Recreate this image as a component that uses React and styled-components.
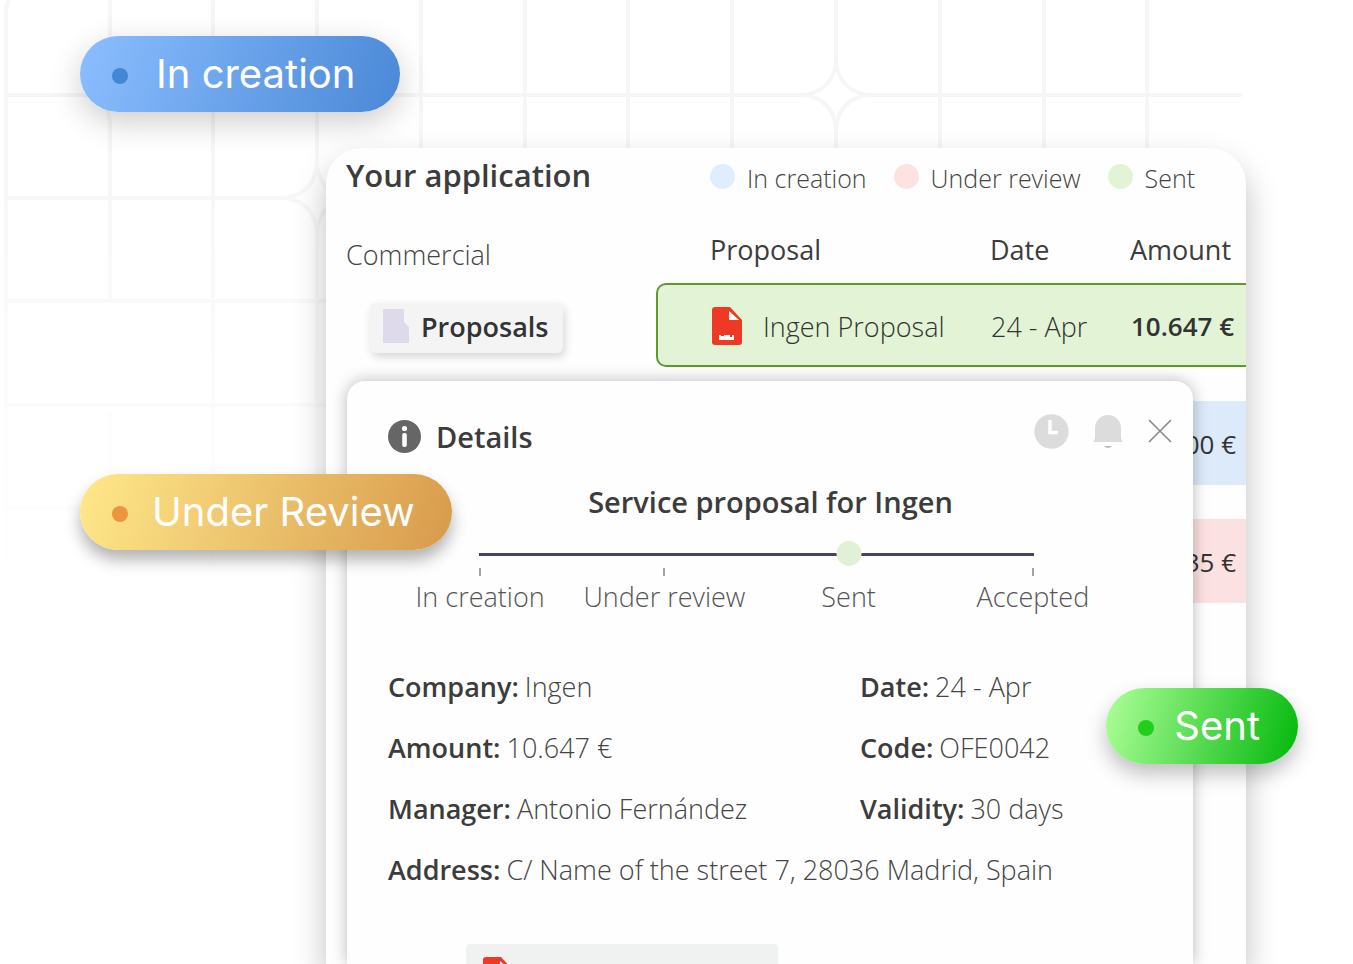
import styled, { createGlobalStyle } from "styled-components";

const GlobalStyle = createGlobalStyle`
	* {
		box-sizing: border-box;
	}
	body {
		margin: 0;
		background-color: white;
		font-family: "Open Sans", sans-serif;
		color: #3c3c3c;
	}
`;

const StyledScene = styled.main`
	position: relative;
	display: flex;
	height: 100vh;
	padding: 148px 107px 0 326px;
	overflow: hidden;
`;

const StyledGrid = styled.svg`
	position: absolute;
	top: 0;
	left: 0;
	z-index: -1;
`;

const StyledBadge = styled.div`
	position: absolute;
	z-index: 2;
	top: ${(props) => props.$top};
	left: ${(props) => props.$left};
	right: ${(props) => props.$right};
	display: flex;
	align-items: center;
	gap: ${(props) => props.$gap};
	height: 76px;
	padding: 0 ${(props) => props.$end} 0 32px;
	border-radius: 38px;
	background-image: linear-gradient(
		${(props) => props.$angle},
		${(props) => props.$from},
		${(props) => props.$to}
	);
	box-shadow: ${(props) => props.$shadow};
	color: white;
	font-family: Inter, sans-serif;
	font-size: 40px;
	font-weight: 400;
	line-height: 76px;
	white-space: nowrap;
	&::before {
		content: "";
		width: 16px;
		height: 16px;
		margin-top: 4px;
		border-radius: 50%;
		background-color: ${(props) => props.$dot};
	}
`;

const StyledCard = styled.section`
	position: relative;
	flex: 1;
	display: flex;
	border-radius: 36px 36px 0 0;
	background-color: #fefefe;
	box-shadow: 0 16px 32px rgba(0, 0, 0, 0.25);
`;

const StyledSidebar = styled.div`
	width: 330px;
	padding: 8px 20px;
`;

const StyledHeading = styled.h1`
	margin: 0;
	font-size: 31px;
	font-weight: 600;
	line-height: 38px;
`;

const StyledGroup = styled.p`
	margin: 41px 0 28px;
	color: #444;
	font-size: 27px;
	font-weight: 300;
	line-height: 40px;
`;

const StyledNavButton = styled.button`
	display: flex;
	align-items: center;
	gap: 12px;
	height: 50px;
	margin-left: 24px;
	padding: 0 14px 4px 12px;
	border: none;
	border-radius: 6px;
	background-color: #f4f4f5;
	box-shadow: 2px 4px 8px rgba(60, 60, 80, 0.2);
	color: #333;
	font-family: inherit;
	font-size: 27px;
	font-weight: 600;
`;

const StyledContent = styled.div`
	flex: 1;
	min-width: 0;
	padding-top: 12px;
`;

const StyledLegend = styled.ul`
	display: flex;
	gap: 27px;
	margin: 0;
	padding: 0 0 0 54px;
	list-style: none;
	color: #444;
	font-size: 25px;
	font-weight: 300;
	line-height: 36px;
	white-space: nowrap;
`;

const StyledLegendItem = styled.li`
	display: flex;
	gap: 12px;
	&::before {
		content: "";
		width: 25px;
		height: 25px;
		margin-top: 4px;
		border-radius: 50%;
		background-color: ${(props) => props.$color};
	}
`;

const StyledTable = styled.table`
	display: block;
	margin-top: 32px;
	font-size: 27px;
	white-space: nowrap;
	& tbody {
		display: flex;
		flex-direction: column;
		gap: 34px;
		margin-top: 11px;
	}
	& th,
	& td {
		padding: 0;
		text-align: left;
	}
`;

const StyledHeadRow = styled.tr`
	display: grid;
	grid-template-columns: 280px 140px 1fr;
	padding-left: 52px;
	line-height: 40px;
	& th {
		font-weight: 500;
	}
`;

const StyledRow = styled.tr`
	display: grid;
	grid-template-columns: 280px 140px 1fr;
	align-items: center;
	height: 84px;
	padding: 2px 0 0 53px;
	border: 2px solid ${(props) => props.$border || props.$color};
	border-width: 2px 0 2px 2px;
	border-radius: 10px 0 0 10px;
	background-color: ${(props) => props.$color};
	color: #333;
	font-weight: 300;
	& td:first-child {
		display: flex;
		align-items: center;
		gap: 20px;
	}
	& td:last-child {
		padding-right: ${(props) => (props.$border ? "0" : "10px")};
		text-align: ${(props) => (props.$border ? "left" : "right")};
		font-size: 26px;
		font-weight: ${(props) => (props.$border ? "600" : "400")};
	}
`;

const StyledDialog = styled.section`
	position: absolute;
	top: 233px;
	bottom: 0;
	left: 21px;
	right: 53px;
	overflow: hidden;
	padding: 29px 20px 0 41px;
	border-radius: 18px 18px 0 0;
	background-color: #fefefe;
	box-shadow: 0 0 16px rgba(0, 0, 0, 0.28);
`;

const StyledDialogHeader = styled.header`
	display: flex;
	justify-content: space-between;
	height: 52px;
`;

const StyledDialogName = styled.h2`
	display: flex;
	align-items: center;
	gap: 15px;
	margin: 0;
	font-size: 29px;
	font-weight: 600;
`;

const StyledActions = styled.div`
	display: flex;
	align-items: center;
	gap: 22px;
	height: 42px;
	& button {
		display: flex;
		padding: 0;
		border: none;
		background: none;
	}
`;

const StyledTitle = styled.h3`
	margin: 20px 20px 31px 0;
	font-size: 29px;
	font-weight: 600;
	line-height: 40px;
	text-align: center;
`;

const StyledProgress = styled.div`
	margin-right: 48px;
`;

const StyledTrack = styled.div`
	height: 3px;
	margin: 0 calc(12.5% - 1px);
	background-color: #494063;
`;

const StyledSteps = styled.ol`
	display: grid;
	grid-template-columns: repeat(4, 1fr);
	margin: 0;
	padding: 0;
	list-style: none;
`;

const StyledStep = styled.li`
	position: relative;
	padding-top: 21px;
	color: #555;
	font-size: 27px;
	font-weight: 300;
	line-height: 40px;
	text-align: center;
	white-space: nowrap;
	&::before {
		content: "";
		position: absolute;
		top: ${(props) => (props.$current ? "-15px" : "12px")};
		left: 50%;
		width: ${(props) => (props.$current ? "25px" : "2px")};
		height: ${(props) => (props.$current ? "25px" : "8px")};
		border-radius: ${(props) => (props.$current ? "50%" : "0")};
		background-color: ${(props) => (props.$current ? "#e0f1d5" : "#a3a3a0")};
		transform: translateX(-50%);
	}
`;

const StyledFields = styled.dl`
	display: grid;
	grid-template-columns: 472px 1fr;
	row-gap: 21px;
	margin: 50px 0 54px;
	font-size: 27px;
	line-height: 40px;
	white-space: nowrap;
`;

const StyledField = styled.div`
	display: flex;
	gap: 6px;
	grid-column: ${(props) => (props.$wide ? "1 / -1" : "auto")};
	& dt {
		font-weight: 600;
	}
	& dd {
		margin: 0;
		color: #444;
		font-weight: 300;
	}
`;

const StyledAttachment = styled.div`
	width: 312px;
	height: 80px;
	margin-left: 78px;
	padding: 12px 16px;
	border-radius: 4px;
	background-color: #f0f1f1;
`;

const statuses = [
	{ name: "In creation", color: "#e0edfd" },
	{ name: "Under review", color: "#fde2e1" },
	{ name: "Sent", color: "#e2f4d5" },
];

const steps = ["In creation", "Under review", "Sent", "Accepted"];

const fields = [
	{ label: "Company:", value: "Ingen" },
	{ label: "Date:", value: "24 - Apr" },
	{ label: "Amount:", value: "10.647 €" },
	{ label: "Code:", value: "OFE0042" },
	{ label: "Manager:", value: "Antonio Fernández" },
	{ label: "Validity:", value: "30 days" },
	{
		label: "Address:",
		value: "C/ Name of the street 7, 28036 Madrid, Spain",
		wide: true,
	},
];

const PdfIcon = () => (
	<svg width="32" height="40" viewBox="0 0 32 40" aria-hidden="true">
		<path
			d="M4 1h15l12 13v22a3 3 0 0 1-3 3H4a3 3 0 0 1-3-3V4a3 3 0 0 1 3-3z"
			fill="#ee3a24"
		/>
		<path d="M18 5v9h10z" fill="white" />
		<path d="M8 29h15v5H8z" fill="white" />
		<path d="M10 29v1h3v-1zM17 31h2v-2h2v2h-2z" fill="#ee3a24" />
	</svg>
);

const BackgroundGrid = () => (
	<StyledGrid width="1353" height="620" aria-hidden="true">
		<defs>
			<linearGradient id="fade" x1="0" y1="0" x2="0" y2="1">
				<stop offset="0" stopColor="white" />
				<stop offset="0.2" stopColor="white" />
				<stop offset="0.95" stopColor="black" />
			</linearGradient>
			<mask id="fadeMask">
				<rect width="1353" height="620" fill="url(#fade)" />
			</mask>
		</defs>
		<g stroke="#f6f6f8" strokeWidth="4" fill="none" mask="url(#fadeMask)">
			<path d="M12 -4Q6 2 6 12V620M110 0V88M110 125V301M110 412V620M213 0V620M317 0V166M317 230V620" />
			<path d="M421 0V160M525 0V160M628 0V160M732 0V160M940 0V160M1044 0V160M1147 0V160M836 0V63M836 127V160" />
			<path d="M6 95H804M868 95H1242M6 198H285M6 301H330M6 405H330M6 508H330" />
			<path d="M80 95Q110 95 110 125" />
			<path d="M804 95Q832 91 836 63Q840 91 868 95Q840 99 836 127Q832 99 804 95z" />
			<path d="M285 198Q313 194 317 166Q321 194 349 198Q321 202 317 230Q313 202 285 198z" />
		</g>
	</StyledGrid>
);

export default function App() {
	return (
		<>
			<GlobalStyle />
			<StyledScene>
				<BackgroundGrid />

				<StyledCard>
					<StyledSidebar>
						<StyledHeading>Your application</StyledHeading>
						<StyledGroup>Commercial</StyledGroup>
						<StyledNavButton type="button">
							<svg width="27" height="34" viewBox="0 0 27 34" aria-hidden="true">
								<path d="M1 0h21v13l5 5v16H1z" fill="#dedaec" />
							</svg>
							Proposals
						</StyledNavButton>
					</StyledSidebar>

					<StyledContent>
						<StyledLegend>
							{statuses.map((status) => (
								<StyledLegendItem key={status.name} $color={status.color}>
									{status.name}
								</StyledLegendItem>
							))}
						</StyledLegend>
						<StyledTable>
							<thead>
								<StyledHeadRow>
									<th>Proposal</th>
									<th>Date</th>
									<th>Amount</th>
								</StyledHeadRow>
							</thead>
							<tbody>
								<StyledRow $color="#e2f4d5" $border="#5c9a2c">
									<td>
										<PdfIcon />
										Ingen Proposal
									</td>
									<td>24 - Apr</td>
									<td>10.647 €</td>
								</StyledRow>
								<StyledRow $color="#ddeafa">
									<td></td>
									<td></td>
									<td>00 €</td>
								</StyledRow>
								<StyledRow $color="#fbe1e1">
									<td></td>
									<td></td>
									<td>35 €</td>
								</StyledRow>
							</tbody>
						</StyledTable>
					</StyledContent>

					<StyledDialog>
						<StyledDialogHeader>
							<StyledDialogName>
								<svg width="33" height="33" viewBox="0 0 33 33" aria-hidden="true">
									<circle cx="16.5" cy="16.5" r="16.5" fill="#666" />
									<circle cx="16.5" cy="8.5" r="2.6" fill="white" />
									<rect x="14.2" y="13" width="4.6" height="14" rx="2" fill="white" />
								</svg>
								Details
							</StyledDialogName>
							<StyledActions>
								<button type="button" aria-label="History">
									<svg width="35" height="35" viewBox="0 0 35 35">
										<circle cx="17.5" cy="17.5" r="17.2" fill="#dcdcdc" />
										<path d="M16 6v12.500h8" fill="none" stroke="white" strokeWidth="3.500" />
									</svg>
								</button>
								<button type="button" aria-label="Notifications">
									<svg width="34" height="35" viewBox="0 0 34 35">
										<path
											d="M4 14a13 13 0 0 1 26 0v9q0 3 2 5H2q2-2 2-5z"
											fill="#dcdcdc"
										/>
										<path d="M13 32h8q-4 4-8 0z" fill="#bbb" />
									</svg>
								</button>
								<button type="button" aria-label="Close">
									<svg width="26" height="26" viewBox="0 0 26 26">
										<path d="M2 2l22 22M24 2L2 24" stroke="#888" strokeWidth="1.600" />
									</svg>
								</button>
							</StyledActions>
						</StyledDialogHeader>

						<StyledTitle>Service proposal for Ingen</StyledTitle>

						<StyledProgress>
							<StyledTrack />
							<StyledSteps>
								{steps.map((step) => (
									<StyledStep key={step} $current={step === "Sent"}>
										{step}
									</StyledStep>
								))}
							</StyledSteps>
						</StyledProgress>

						<StyledFields>
							{fields.map((field) => (
								<StyledField key={field.label} $wide={field.wide}>
									<dt>{field.label}</dt>
									<dd>{field.value}</dd>
								</StyledField>
							))}
						</StyledFields>

						<StyledAttachment>
							<PdfIcon />
						</StyledAttachment>
					</StyledDialog>
				</StyledCard>

				<StyledBadge
					$top="36px"
					$left="80px"
					$gap="28px"
					$end="45px"
					$angle="110deg"
					$from="#8bbeff"
					$to="#4a88d6"
					$dot="#4388d4"
					$shadow="0 10px 32px rgba(0, 0, 0, 0.2)"
				>
					In creation
				</StyledBadge>
				<StyledBadge
					$top="474px"
					$left="80px"
					$gap="24px"
					$end="37px"
					$angle="110deg"
					$from="#ffe88a"
					$to="#d89a4c"
					$dot="#ec943e"
					$shadow="0 10px 16px rgba(0, 0, 0, 0.3)"
				>
					Under Review
				</StyledBadge>
				<StyledBadge
					$top="688px"
					$right="55px"
					$gap="20px"
					$end="38px"
					$angle="105deg"
					$from="#aeff98"
					$to="#02b80c"
					$dot="#20cf1c"
					$shadow="0 10px 20px rgba(0, 0, 0, 0.25)"
				>
					Sent
				</StyledBadge>
			</StyledScene>
		</>
	);
}
